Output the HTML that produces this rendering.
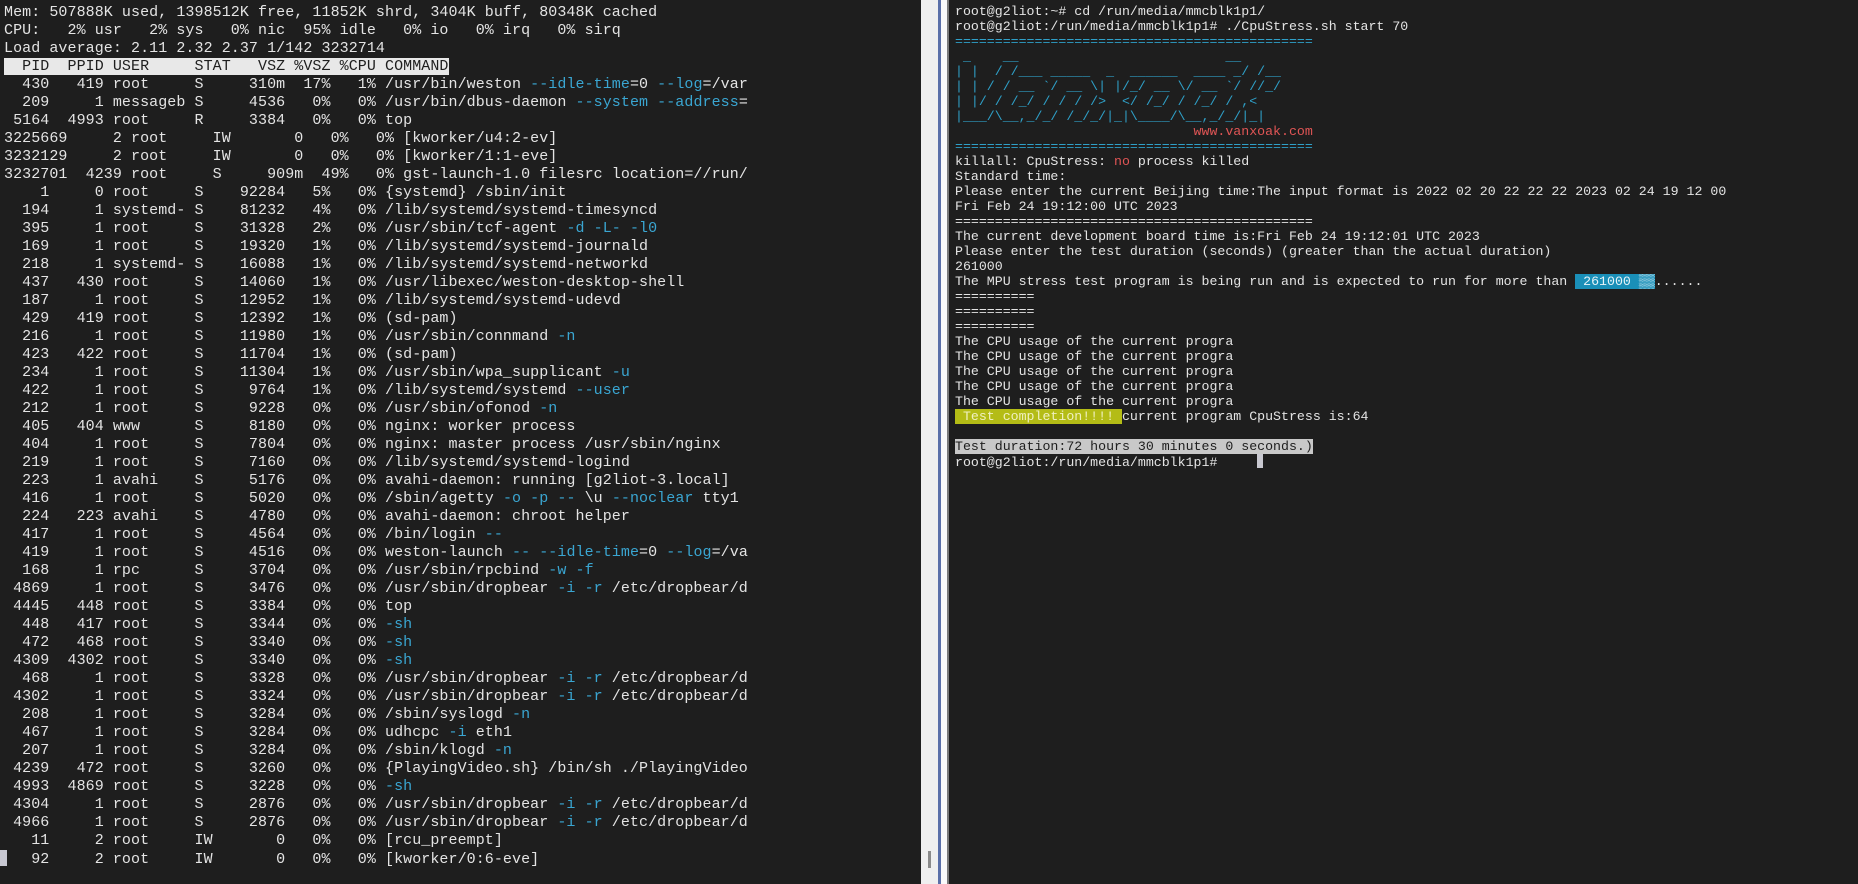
<!DOCTYPE html>
<html><head><meta charset="utf-8"><style>
html,body{margin:0;padding:0;width:1858px;height:884px;overflow:hidden;background:#1e1e1e}
pre{margin:0;font-family:"Liberation Mono","DejaVu Sans Mono",monospace;white-space:pre}
#left{position:absolute;left:0;top:0;width:921px;height:884px;background:#1e1e1e;overflow:hidden}
#left pre{position:absolute;left:4px;top:4px;font-size:15px;line-height:18px;color:#e4e4e4;letter-spacing:0.07px}
.b{color:#3aa6d2}
.hd{background:#e8e8e8;color:#1e1e1e}
.cur{display:inline-block;width:7px;height:16px;background:#c8c8d2;vertical-align:-3px;margin-left:-4px;margin-right:-3px}
#div1{position:absolute;left:921px;top:0;width:17px;height:884px;background:#efefef}
#div2{position:absolute;left:938px;top:0;width:3px;height:884px;background:#5a6fa8}
#div3{position:absolute;left:941px;top:0;width:6px;height:884px;background:#fafafa}
#div4{position:absolute;left:947px;top:0;width:2px;height:884px;background:#7a7a7a}
#gcur{position:absolute;left:928px;top:851px;width:3px;height:17px;background:#8a8a8a}
#right{position:absolute;left:949px;top:0;width:909px;height:884px;background:#1e1e1e;overflow:hidden}
#right pre{position:absolute;left:6px;font-size:13.25px;line-height:15px;color:#e4e4e4}
#rt{top:4px}
#rl{top:154px}
.c{color:#2fa0c8}
.r{color:#e05555}
.hb{background:#1a8fb8;color:#e8f4f8}
.hy{background:#b4bc16;color:#f0f0c0}
.hg{background:#c8c8c8;color:#1e1e1e}
.rc{display:inline-block;width:6px;height:14px;background:#c8c8d0;vertical-align:-2px}
</style></head><body>
<div id="left"><pre>Mem: 507888K used, 1398512K free, 11852K shrd, 3404K buff, 80348K cached
CPU:   2% usr   2% sys   0% nic  95% idle   0% io   0% irq   0% sirq
Load average: 2.11 2.32 2.37 1/142 3232714
<span class="hd">  PID  PPID USER     STAT   VSZ %VSZ %CPU COMMAND</span>
  430   419 root     S     310m  17%   1% /usr/bin/weston <span class="b">--idle-time</span>=0 <span class="b">--log</span>=/var
  209     1 messageb S     4536   0%   0% /usr/bin/dbus-daemon <span class="b">--system --address</span>=
 5164  4993 root     R     3384   0%   0% top
3225669     2 root     IW       0   0%   0% [kworker/u4:2-ev]
3232129     2 root     IW       0   0%   0% [kworker/1:1-eve]
3232701  4239 root     S     909m  49%   0% gst-launch-1.0 filesrc location=//run/
    1     0 root     S    92284   5%   0% {systemd} /sbin/init
  194     1 systemd- S    81232   4%   0% /lib/systemd/systemd-timesyncd
  395     1 root     S    31328   2%   0% /usr/sbin/tcf-agent <span class="b">-d -L- -l0</span>
  169     1 root     S    19320   1%   0% /lib/systemd/systemd-journald
  218     1 systemd- S    16088   1%   0% /lib/systemd/systemd-networkd
  437   430 root     S    14060   1%   0% /usr/libexec/weston-desktop-shell
  187     1 root     S    12952   1%   0% /lib/systemd/systemd-udevd
  429   419 root     S    12392   1%   0% (sd-pam)
  216     1 root     S    11980   1%   0% /usr/sbin/connmand <span class="b">-n</span>
  423   422 root     S    11704   1%   0% (sd-pam)
  234     1 root     S    11304   1%   0% /usr/sbin/wpa_supplicant <span class="b">-u</span>
  422     1 root     S     9764   1%   0% /lib/systemd/systemd <span class="b">--user</span>
  212     1 root     S     9228   0%   0% /usr/sbin/ofonod <span class="b">-n</span>
  405   404 www      S     8180   0%   0% nginx: worker process
  404     1 root     S     7804   0%   0% nginx: master process /usr/sbin/nginx
  219     1 root     S     7160   0%   0% /lib/systemd/systemd-logind
  223     1 avahi    S     5176   0%   0% avahi-daemon: running [g2liot-3.local]
  416     1 root     S     5020   0%   0% /sbin/agetty <span class="b">-o -p --</span> \u <span class="b">--noclear</span> tty1
  224   223 avahi    S     4780   0%   0% avahi-daemon: chroot helper
  417     1 root     S     4564   0%   0% /bin/login <span class="b">--</span>
  419     1 root     S     4516   0%   0% weston-launch <span class="b">-- --idle-time</span>=0 <span class="b">--log</span>=/va
  168     1 rpc      S     3704   0%   0% /usr/sbin/rpcbind <span class="b">-w -f</span>
 4869     1 root     S     3476   0%   0% /usr/sbin/dropbear <span class="b">-i -r</span> /etc/dropbear/d
 4445   448 root     S     3384   0%   0% top
  448   417 root     S     3344   0%   0% <span class="b">-sh</span>
  472   468 root     S     3340   0%   0% <span class="b">-sh</span>
 4309  4302 root     S     3340   0%   0% <span class="b">-sh</span>
  468     1 root     S     3328   0%   0% /usr/sbin/dropbear <span class="b">-i -r</span> /etc/dropbear/d
 4302     1 root     S     3324   0%   0% /usr/sbin/dropbear <span class="b">-i -r</span> /etc/dropbear/d
  208     1 root     S     3284   0%   0% /sbin/syslogd <span class="b">-n</span>
  467     1 root     S     3284   0%   0% udhcpc <span class="b">-i</span> eth1
  207     1 root     S     3284   0%   0% /sbin/klogd <span class="b">-n</span>
 4239   472 root     S     3260   0%   0% {PlayingVideo.sh} /bin/sh ./PlayingVideo
 4993  4869 root     S     3228   0%   0% <span class="b">-sh</span>
 4304     1 root     S     2876   0%   0% /usr/sbin/dropbear <span class="b">-i -r</span> /etc/dropbear/d
 4966     1 root     S     2876   0%   0% /usr/sbin/dropbear <span class="b">-i -r</span> /etc/dropbear/d
   11     2 root     IW       0   0%   0% [rcu_preempt]
<span class="cur"></span>   92     2 root     IW       0   0%   0% [kworker/0:6-eve]</pre></div>
<div id="div1"></div><div id="div2"></div><div id="div3"></div><div id="div4"></div><div id="gcur"></div>
<div id="right">
<pre id="rt">root@g2liot:~# cd /run/media/mmcblk1p1/
root@g2liot:/run/media/mmcblk1p1# ./CpuStress.sh start 70
<span class="c">=============================================</span>
<span class="c"> _    __                          __
| |  / /___ _____  _  ______  ____ _/ /__
| | / / __ `/ __ \| |/_/ __ \/ __ `/ //_/
| |/ / /_/ / / / /&gt;  &lt;/ /_/ / /_/ / ,&lt;
|___/\__,_/_/ /_/_/|_|\____/\__,_/_/|_|</span>
                              <span class="r">www.vanxoak.com</span>
<span class="c">=============================================</span></pre>
<pre id="rl">killall: CpuStress: <span class="r">no</span> process killed
Standard time:
Please enter the current Beijing time:The input format is 2022 02 20 22 22 22 2023 02 24 19 12 00
Fri Feb 24 19:12:00 UTC 2023
=============================================
The current development board time is:Fri Feb 24 19:12:01 UTC 2023
Please enter the test duration (seconds) (greater than the actual duration)
261000
The MPU stress test program is being run and is expected to run for more than <span class="hb"> 261000 ▒▒</span>......
==========
==========
==========
The CPU usage of the current progra
The CPU usage of the current progra
The CPU usage of the current progra
The CPU usage of the current progra
The CPU usage of the current progra
<span class="hy"> Test completion!!!! </span>current program CpuStress is:64

<span class="hg">Test duration:72 hours 30 minutes 0 seconds.)</span>
root@g2liot:/run/media/mmcblk1p1#     <span class="rc"></span></pre>
</div>
</body></html>
